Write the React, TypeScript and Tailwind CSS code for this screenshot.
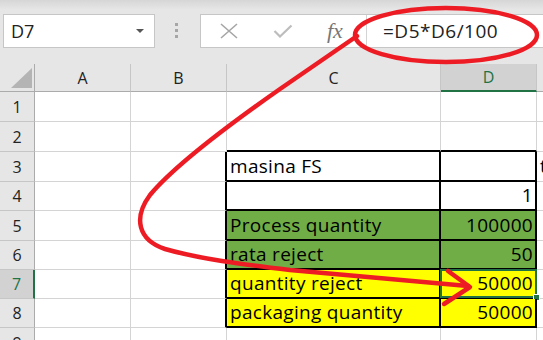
import React from "react";

const cellFont = { fontFamily: '"Open Sans", "Liberation Sans", sans-serif' };

interface Row {
  n: number;
  h: string;
  c?: string;
  d?: string;
  e?: string;
  fill?: "green" | "yellow";
  table?: boolean;
  selected?: boolean;
}

const rows: Row[] = [
  { n: 1, h: "h-[30px]" },
  { n: 2, h: "h-[30px]" },
  { n: 3, h: "h-[30px]", c: "masina FS", d: "", e: "t", table: true },
  { n: 4, h: "h-[29px]", d: "1", table: true },
  { n: 5, h: "h-[30px]", c: "Process quantity", d: "100000", fill: "green", table: true },
  { n: 6, h: "h-[29px]", c: "rata reject", d: "50", fill: "green", table: true },
  { n: 7, h: "h-[29px]", c: "quantity reject", d: "50000", fill: "yellow", table: true, selected: true },
  { n: 8, h: "h-[29px]", c: "packaging quantity", d: "50000", fill: "yellow", table: true },
  { n: 9, h: "h-[30px]" },
];

function fillClass(fill?: "green" | "yellow") {
  if (fill === "green") return "bg-[#70ad47]";
  if (fill === "yellow") return "bg-[#ffff00]";
  return "bg-white";
}

function SheetRow({ row }: { row: Row }) {
  const thickTop = row.n === 2;
  const cBorder = row.table
    ? "border-r-2 border-b-2 border-black"
    : thickTop
    ? "border-r border-r-[#d4d4d4] border-b-2 border-b-black"
    : "border-r border-b border-[#d4d4d4]";
  const dBorder = row.table
    ? "border-r-2 border-b-2 border-black"
    : thickTop
    ? "border-r border-r-[#d4d4d4] border-b-2 border-b-black"
    : "border-r border-b border-[#d4d4d4]";
  const bBorder = row.table
    ? "border-r-2 border-r-black border-b border-b-[#d4d4d4]"
    : "border-r border-b border-[#d4d4d4]";

  return (
    <div className={`flex ${row.h}`}>
      <div
        className={`w-[35px] shrink-0 flex items-center justify-center text-[16px] border-b ${
          row.selected
            ? "bg-[#d2d2d2] text-[#217346] border-r-2 border-r-[#217346] border-b-[#c6c6c6]"
            : "bg-[#e6e6e6] text-[#222] border-r border-r-[#ababab] border-b-[#c6c6c6]"
        }`}
      >
        {row.n}
      </div>
      <div className="w-[96px] shrink-0 border-r border-b border-[#d4d4d4]" />
      <div className={`w-[96px] shrink-0 ${bBorder}`} />
      <div
        className={`w-[214px] shrink-0 flex items-end pl-[3px] text-[19px] tracking-[0.3px] text-black leading-none whitespace-nowrap ${fillClass(
          row.fill
        )} ${cBorder}`}
        style={cellFont}
      >
        <span className="pb-[4px]">{row.c}</span>
      </div>
      <div
        className={`relative w-[96px] shrink-0 flex items-end justify-end pr-[2px] text-[19px] tracking-[0.3px] text-black leading-none ${fillClass(
          row.fill
        )} ${dBorder}`}
        style={cellFont}
      >
        <span className="pb-[4px]">{row.d}</span>
        {row.selected && (
          <>
            <div className="absolute left-[-1px] top-[-1px] right-[-2px] bottom-[-1px] border-2 border-[#217346]" />
            <div className="absolute right-[-5px] bottom-[-4px] w-[7px] h-[7px] bg-[#217346] border border-white" />
          </>
        )}
      </div>
      <div
        className="flex-1 flex items-end pl-[3px] text-[19px] leading-none overflow-hidden border-b border-[#d4d4d4] bg-white"
        style={cellFont}
      >
        <span className="pb-[5px]">{row.e}</span>
      </div>
    </div>
  );
}

export default function App() {
  return (
    <div
      className="relative w-[543px] h-[340px] overflow-hidden bg-white"
      style={{ fontFamily: '"Open Sans", "Liberation Sans", sans-serif' }}
    >
      {/* formula bar */}
      <div className="h-[64px] bg-gradient-to-b from-[#d6d6d6] via-[#e6e6e6] via-15% to-[#e6e6e6] flex items-start pt-[14px] pl-[3px]">
        <div className="w-[152px] h-[34px] bg-white border border-[#c6c6c6] flex items-center pl-[7px] pr-[10px] shrink-0">
          <span className="flex-1 text-[18px] text-[#222]">D7</span>
          <div className="w-0 h-0 border-l-[4px] border-r-[4px] border-t-[4px] border-l-transparent border-r-transparent border-t-[#555]" />
        </div>
        <div className="ml-[20px] mt-[9px] flex flex-col gap-[3px] shrink-0">
          <div className="w-[3px] h-[3px] bg-[#a6a6a6]" />
          <div className="w-[3px] h-[3px] bg-[#a6a6a6]" />
          <div className="w-[3px] h-[3px] bg-[#a6a6a6]" />
        </div>
        <div className="ml-[22px] h-[34px] flex-1 flex bg-white border border-[#c6c6c6] -mr-[4px]">
          <div className="w-[166px] shrink-0 flex items-center border-r border-[#d4d4d4]">
            <svg width="18" height="16" viewBox="0 0 18 16" className="ml-[19px]">
              <path d="M1 1 L17 15 M17 1 L1 15" stroke="#a6a6a6" strokeWidth="1.6" fill="none" />
            </svg>
            <svg width="20" height="14" viewBox="0 0 20 14" className="ml-[35px]">
              <path d="M1.5 7 L7 12.5 L18.5 1.5" stroke="#bdbdbd" strokeWidth="2.2" fill="none" />
            </svg>
            <span
              className="ml-[34px] text-[22px] italic text-[#777] leading-none"
              style={{ fontFamily: '"Liberation Serif", "DejaVu Serif", serif' }}
            >
              fx
            </span>
          </div>
          <div className="flex-1 flex items-center pl-[16px] text-[19px] text-[#222] tracking-[0.5px]">
            =D5*D6/100
          </div>
        </div>
      </div>

      {/* column headers */}
      <div className="flex h-[28px] bg-[#e6e6e6] text-[16px] text-[#222]">
        <div className="relative w-[35px] shrink-0 border-r border-r-[#ababab] border-b border-b-[#ababab]">
          <div className="absolute left-[11px] top-[4px] w-0 h-0 border-l-[21px] border-b-[20px] border-l-transparent border-b-[#b4b4b4]" />
        </div>
        <div className="w-[96px] shrink-0 flex items-center justify-center border-r border-r-[#c6c6c6] border-b border-b-[#ababab]">
          A
        </div>
        <div className="w-[96px] shrink-0 flex items-center justify-center border-r border-r-[#c6c6c6] border-b border-b-[#ababab]">
          B
        </div>
        <div className="w-[214px] shrink-0 flex items-center justify-center border-r border-r-[#c6c6c6] border-b border-b-[#ababab]">
          C
        </div>
        <div className="w-[96px] shrink-0 flex items-center justify-center bg-[#d2d2d2] text-[#217346] border-r border-r-[#c6c6c6] border-b-2 border-b-[#217346]">
          D
        </div>
        <div className="flex-1 border-b border-b-[#ababab]" />
      </div>

      {/* grid */}
      {rows.map((r) => (
        <SheetRow key={r.n} row={r} />
      ))}

      {/* red annotation */}
      <svg
        className="absolute left-0 top-0 pointer-events-none"
        width="543"
        height="340"
        viewBox="0 0 543 340"
      >
        <ellipse cx="446" cy="35" rx="91" ry="27" fill="none" stroke="#ed1c24" strokeWidth="4.5" />
        <path
          d="M357 36 L280 89 C230 124 175 165 150 195 C133 218 138 240 165 249 C200 259 240 264 290 270 L468 286"
          fill="none"
          stroke="#ed1c24"
          strokeWidth="4.5"
          strokeLinecap="round"
          strokeLinejoin="round"
        />
        <path
          d="M448 271 L470 287 L444 304"
          fill="none"
          stroke="#ed1c24"
          strokeWidth="4.5"
          strokeLinecap="round"
          strokeLinejoin="round"
        />
      </svg>
    </div>
  );
}
